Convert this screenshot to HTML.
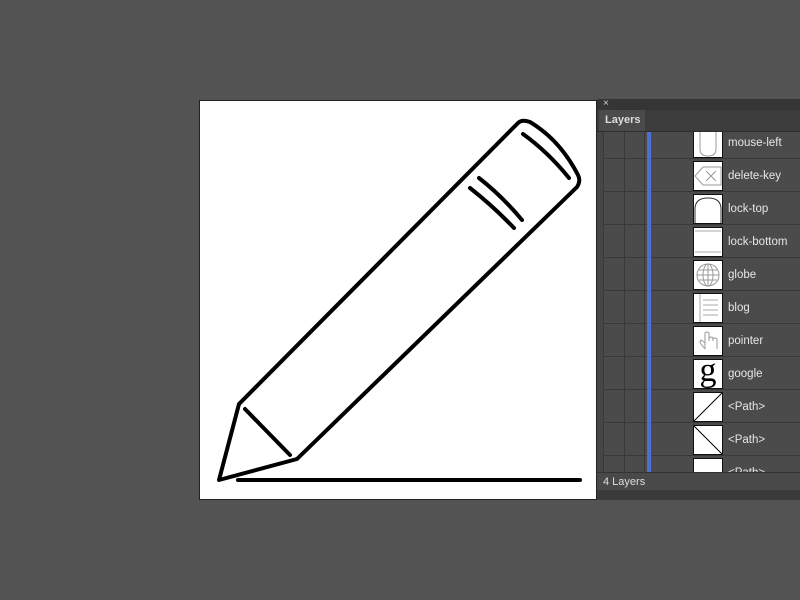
<!DOCTYPE html>
<html><head><style>
body{margin:0;width:800px;height:600px;background:#535353;position:relative;overflow:hidden;font-family:"Liberation Sans",sans-serif}
#art{position:absolute;left:199px;top:100px;width:398px;height:400px;background:#fff;border:1px solid #222;box-sizing:border-box}
#panel{position:absolute;left:597px;top:99px;width:203px;height:401px;background:#464646}
#top{position:absolute;left:0;top:0;width:203px;height:11px;background:#353535;color:#ccc;font-size:10px;line-height:10px;padding-left:6px;box-sizing:border-box}
#tabrow{position:absolute;left:0;top:11px;width:203px;height:21px;background:#3c3c3c;border-bottom:1px solid #2e2e2e}
#tab{position:absolute;left:2px;top:0;width:46px;height:21px;background:#4b4b4b;color:#ddd;font-size:11px;font-weight:bold;line-height:20px;padding-left:6px;box-sizing:border-box}
#list{position:absolute;left:6px;top:33px;width:197px;height:340px;overflow:hidden;background:#4b4b4b}
.row{position:absolute;left:0;width:197px;height:32px;border-bottom:1px solid #393939}
.c1{position:absolute;left:0;top:0;width:20px;height:33px;border-right:1px solid #393939;border-left:1px solid #393939}
.c2{position:absolute;left:21px;top:0;width:20px;height:33px;border-right:1px solid #393939}
.bar{position:absolute;left:44px;top:0;width:4px;height:33px;background:#4e6fd0}
.th{position:absolute;left:90px;top:2px;width:28px;height:28px;background:#fff;border:1px solid #111;overflow:hidden}
.th svg{position:absolute;left:0;top:0}
.t{position:absolute;left:125px;top:11px;color:#e6e6e6;font-size:11.5px}
#bottom{position:absolute;left:0;top:373px;width:203px;height:18px;background:#494949;border-top:1px solid #333;color:#ddd;font-size:11px;line-height:18px;padding-left:6px;box-sizing:border-box}
#bstrip{position:absolute;left:0;top:391px;width:203px;height:10px;background:#3a3a3a}
</style></head><body>
<div id="art"><svg width="398" height="400" viewBox="199 100 398 400" style="position:absolute;left:-1px;top:-1px">
<g fill="none" stroke="#000" stroke-width="4" stroke-linejoin="round" stroke-linecap="round">
<path d="M219 480 L239 404 L518 123 Q522 119 530 122 Q560 140 578 175 Q581 181 577 187 L297 459 Z"/>
<path d="M245 409 L290 455"/>
<path d="M523 134 Q548 152 569 178"/>
<path d="M479 178 Q502 196 522 220"/>
<path d="M470 188 Q493 206 514 228"/>
<path d="M238 480 L580 480"/>
</g></svg></div>
<div id="panel">
<div id="top">×</div>
<div id="tabrow"><div id="tab">Layers</div></div>
<div id="list">
<div class="row" style="top:-6px"><div class="c1"></div><div class="c2"></div><div class="bar"></div><div class="th"><svg width="28" height="28"><path d="M6 0 V20 Q6 27 14 27 Q22 27 22 20 V0" fill="none" stroke="#999"/></svg></div><div class="t">mouse-left</div></div>
<div class="row" style="top:27px"><div class="c1"></div><div class="c2"></div><div class="bar"></div><div class="th"><svg width="28" height="28"><path d="M1 14 L9 5 H27 V23 H9 Z M12 9 L22 19 M22 9 L12 19" fill="none" stroke="#999"/></svg></div><div class="t">delete-key</div></div>
<div class="row" style="top:60px"><div class="c1"></div><div class="c2"></div><div class="bar"></div><div class="th"><svg width="28" height="28"><path d="M1 28 V14 Q1 3 14 3 Q27 3 27 14 V28" fill="none" stroke="#333"/></svg></div><div class="t">lock-top</div></div>
<div class="row" style="top:93px"><div class="c1"></div><div class="c2"></div><div class="bar"></div><div class="th"><svg width="28" height="28"><path d="M1 3 H27 M1 24 H27" fill="none" stroke="#aaa"/></svg></div><div class="t">lock-bottom</div></div>
<div class="row" style="top:126px"><div class="c1"></div><div class="c2"></div><div class="bar"></div><div class="th"><svg width="28" height="28"><circle cx="14" cy="14" r="11" fill="none" stroke="#999"/><path d="M3 14 H25 M14 3 V25 M5 9 H23 M5 19 H23" fill="none" stroke="#999"/><ellipse cx="14" cy="14" rx="5" ry="11" fill="none" stroke="#999"/></svg></div><div class="t">globe</div></div>
<div class="row" style="top:159px"><div class="c1"></div><div class="c2"></div><div class="bar"></div><div class="th"><svg width="28" height="28"><path d="M6 0 V28 M9 6 H24 M9 11 H24 M9 16 H24 M9 21 H24" fill="none" stroke="#aaa"/></svg></div><div class="t">blog</div></div>
<div class="row" style="top:192px"><div class="c1"></div><div class="c2"></div><div class="bar"></div><div class="th"><svg width="28" height="28"><path d="M11 22 V6 Q13 4 15 6 V14 V11 Q17 9 19 11 V14 V12 Q21 10 23 12 V22 M11 16 L7 13 Q5 14 7 17 L11 22" fill="none" stroke="#999"/></svg></div><div class="t">pointer</div></div>
<div class="row" style="top:225px"><div class="c1"></div><div class="c2"></div><div class="bar"></div><div class="th" style="font-family:'Liberation Serif',serif;font-size:34px;line-height:22px;text-align:center">g</div><div class="t">google</div></div>
<div class="row" style="top:258px"><div class="c1"></div><div class="c2"></div><div class="bar"></div><div class="th"><svg width="28" height="28"><path d="M0 28 L28 0" stroke="#000"/></svg></div><div class="t">&lt;Path&gt;</div></div>
<div class="row" style="top:291px"><div class="c1"></div><div class="c2"></div><div class="bar"></div><div class="th"><svg width="28" height="28"><path d="M0 0 L28 28" stroke="#000"/></svg></div><div class="t">&lt;Path&gt;</div></div>
<div class="row" style="top:324px"><div class="c1"></div><div class="c2"></div><div class="bar"></div><div class="th"></div><div class="t">&lt;Path&gt;</div></div>
</div>
<div id="bottom">4 Layers</div>
<div id="bstrip"></div>
</div>
</body></html>
